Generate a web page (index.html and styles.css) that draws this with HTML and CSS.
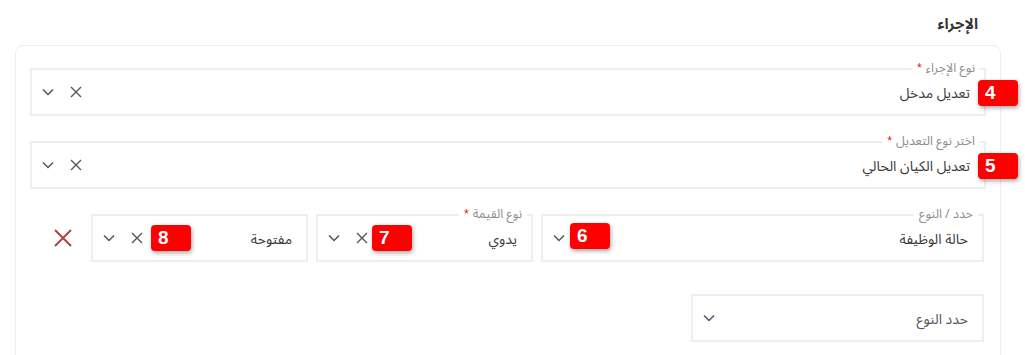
FILE: index.html
```html
<!DOCTYPE html>
<html lang="ar" dir="rtl">
<head>
<meta charset="utf-8">
<link rel="stylesheet" href="styles.css">
</head>
<body>
<div class="page">
  <h2 class="title">الإجراء</h2>
  <div class="card">
    <div class="field full">
      <span class="legend"><span class="lbl">نوع الإجراء</span><span class="req">*</span></span>
      <span class="value">تعديل مدخل</span>
      <span class="icons">
        <svg class="ic-x" viewBox="0 0 12 12"><path d="M1 1L11 11M11 1L1 11"/></svg>
        <svg class="ic-chev" viewBox="0 0 12 8"><path d="M1 1.5L6 6.5L11 1.5"/></svg>
      </span>
      <span class="badge b4">4</span>
    </div>

    <div class="field full">
      <span class="legend"><span class="lbl">اختر نوع التعديل</span><span class="req">*</span></span>
      <span class="value">تعديل الكيان الحالي</span>
      <span class="icons">
        <svg class="ic-x" viewBox="0 0 12 12"><path d="M1 1L11 11M11 1L1 11"/></svg>
        <svg class="ic-chev" viewBox="0 0 12 8"><path d="M1 1.5L6 6.5L11 1.5"/></svg>
      </span>
      <span class="badge b5">5</span>
    </div>

    <div class="row">
      <div class="field w-type">
        <span class="legend"><span class="lbl">حدد / النوع</span></span>
        <span class="value">حالة الوظيفة</span>
        <span class="icons">
          <svg class="ic-chev" viewBox="0 0 12 8"><path d="M1 1.5L6 6.5L11 1.5"/></svg>
        </span>
        <span class="badge b6">6</span>
      </div>
      <div class="field w-small">
        <span class="legend"><span class="lbl">نوع القيمة</span><span class="req">*</span></span>
        <span class="value">يدوي</span>
        <span class="icons">
          <svg class="ic-x" viewBox="0 0 12 12"><path d="M1 1L11 11M11 1L1 11"/></svg>
          <svg class="ic-chev" viewBox="0 0 12 8"><path d="M1 1.5L6 6.5L11 1.5"/></svg>
        </span>
        <span class="badge b7">7</span>
      </div>
      <div class="field w-small">
        <span class="value">مفتوحة</span>
        <span class="icons">
          <svg class="ic-x" viewBox="0 0 12 12"><path d="M1 1L11 11M11 1L1 11"/></svg>
          <svg class="ic-chev" viewBox="0 0 12 8"><path d="M1 1.5L6 6.5L11 1.5"/></svg>
        </span>
        <span class="badge b8">8</span>
      </div>
      <div class="delete">
        <svg class="ic-del" viewBox="0 0 18 18"><path d="M1 1L17 17M17 1L1 17"/></svg>
      </div>
    </div>

    <div class="row">
      <div class="field w-add">
        <span class="value placeholder">حدد النوع</span>
        <span class="icons">
          <svg class="ic-chev" viewBox="0 0 12 8"><path d="M1 1.5L6 6.5L11 1.5"/></svg>
        </span>
      </div>
    </div>
  </div>
</div>
</body>
</html>
```

FILE: styles.css
```css
* { box-sizing: border-box; }
html, body {
  margin: 0;
  background: #ffffff;
}
body {
  font-family: "Noto Sans Arabic", "DejaVu Sans", "Noto Sans", sans-serif;
  color: #333;
  overflow: hidden;
}
.page {
  padding: 0 24px 0 15px;
}
.title {
  margin: 0;
  padding: 8px 23px 0 0;
  height: 45px;
  font-size: 15px;
  font-weight: bold;
  color: #333;
}
.card {
  border: 1px solid #eeeeee;
  border-radius: 8px;
  padding: 22px 14px 40px;
  display: flex;
  flex-direction: column;
  gap: 25px;
}
.field {
  position: relative;
  height: 48px;
  border: 2px solid #eeeeee;
  display: flex;
  align-items: center;
  padding: 0 14px 0 10px;
}
.legend {
  position: absolute;
  top: -9px;
  right: 4px;
  background: #fff;
  padding: 0 5px;
  font-size: 12.5px;
  color: #8c8c8c;
  line-height: 14px;
  display: flex;
  align-items: center;
}
.req {
  color: #e02020;
  margin-right: 4px;
  font-family: "Liberation Sans", sans-serif;
}
.value {
  flex: 1;
  font-size: 14px;
  line-height: 18px;
  padding-top: 3px;
  color: #3a3a3a;
}
.placeholder { color: #555; }
.icons {
  display: flex;
  align-items: center;
  gap: 16px;
}
.ic-x {
  width: 12px;
  height: 12px;
  fill: none;
  stroke: #555;
  stroke-width: 1.4;
}
.ic-chev {
  width: 12px;
  height: 8px;
  fill: none;
  stroke: #4a5566;
  stroke-width: 1.5;
}
.badge {
  position: absolute;
  width: 40px;
  height: 26px;
  background: #ff0000;
  border-radius: 4px;
  color: #fff;
  font-family: "Liberation Sans", Arial, sans-serif;
  font-weight: bold;
  font-size: 19px;
  line-height: 26px;
  padding-left: 7px;
  text-align: left;
  box-shadow: 1px 2px 4px rgba(0,0,0,0.35);
}
.b4, .b5 { right: -34px; top: 10px; }
.b6 { left: 27px; top: 7px; }
.b7 { left: 54px; top: 9px; }
.b8 { left: 58px; top: 9px; }
.row {
  display: flex;
  gap: 8px;
  padding-right: 2px;
}
.row + .row { margin-top: 7px; }
.w-type { width: 443px; }
.w-small { width: 217px; }
.w-add { width: 293px; }
.delete {
  flex: 1;
  display: flex;
  align-items: center;
  justify-content: center;
  padding-left: 12px;
}
.ic-del {
  width: 18px;
  height: 18px;
  fill: none;
  stroke: #b3423f;
  stroke-width: 2;
}
```
